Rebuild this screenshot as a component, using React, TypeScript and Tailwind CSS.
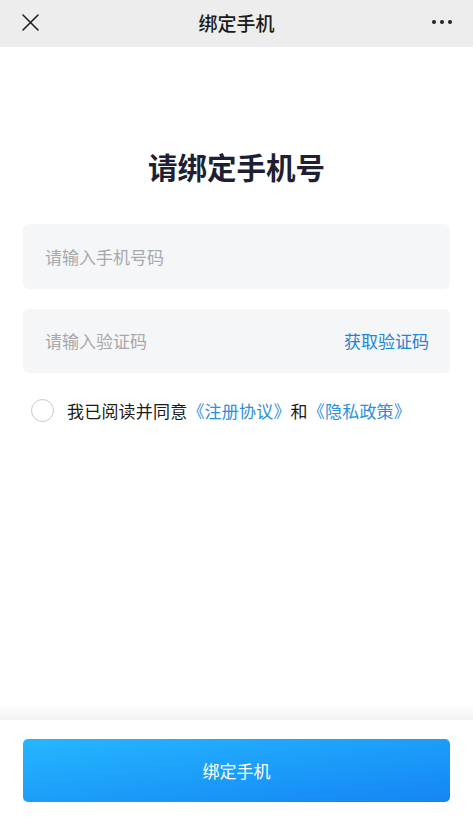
import React from "react";

export default function App() {
  const font = { fontFamily: '"Noto Sans CJK SC", "Noto Sans", sans-serif' };
  return (
    <div className="flex min-h-[817px] w-full flex-col bg-white" style={font}>
      {/* Header */}
      <div className="relative flex h-[47px] items-center justify-center bg-[#ededed]">
        <svg className="absolute left-[21px] top-[13px]" width="19" height="19" viewBox="0 0 19 19">
          <path d="M2 2 L17 17 M17 2 L2 17" stroke="#222" strokeWidth="1.6" strokeLinecap="round" />
        </svg>
        <span className="text-[19px] font-medium text-[#1a1a1a]">绑定手机</span>
        <div className="absolute right-[21px] top-[20px] flex gap-[4px]">
          <span className="h-[4px] w-[4px] rounded-full bg-[#222]" />
          <span className="h-[4px] w-[4px] rounded-full bg-[#222]" />
          <span className="h-[4px] w-[4px] rounded-full bg-[#222]" />
        </div>
      </div>

      {/* Content */}
      <div className="flex flex-1 flex-col px-[23px]">
        <h1 className="mt-[98px] text-center text-[29.5px] font-bold leading-[42px] text-[#1e1f33]">
          请绑定手机号
        </h1>
        <div className="mt-[37px] flex h-[65px] items-center rounded-[6px] bg-[#f5f6f8] px-[22px]">
          <span className="text-[17px] text-[#a7a8ab]">请输入手机号码</span>
        </div>
        <div className="mt-[20px] flex h-[64px] items-center justify-between rounded-[6px] bg-[#f5f6f8] pl-[22px] pr-[21px]">
          <span className="text-[17px] text-[#a7a8ab]">请输入验证码</span>
          <span className="text-[17px] text-[#1e84d3]">获取验证码</span>
        </div>
        <div className="mt-[25px] flex items-center pl-[8px]">
          <span className="h-[23px] w-[23px] rounded-full border border-[#c8c8c8]" />
          <span className="ml-[13px] text-[17px] tracking-[0.2px] text-[#1a1a1a]">
            我已阅读并同意<span className="text-[#2d8fdc]">《注册协议》</span>和<span className="text-[#2d8fdc]">《隐私政策》</span>
          </span>
        </div>
      </div>

      {/* Bottom */}
      <div className="h-[17px] bg-gradient-to-b from-white to-[#f3f3f6]" />
      <div className="flex h-[97px] flex-col px-[23px] pt-[19px]">
        <button className="flex h-[63px] w-full items-center justify-center rounded-[5px] bg-gradient-to-br from-[#27b6fe] to-[#1685f4] text-[17px] text-white">
          绑定手机
        </button>
      </div>
    </div>
  );
}
